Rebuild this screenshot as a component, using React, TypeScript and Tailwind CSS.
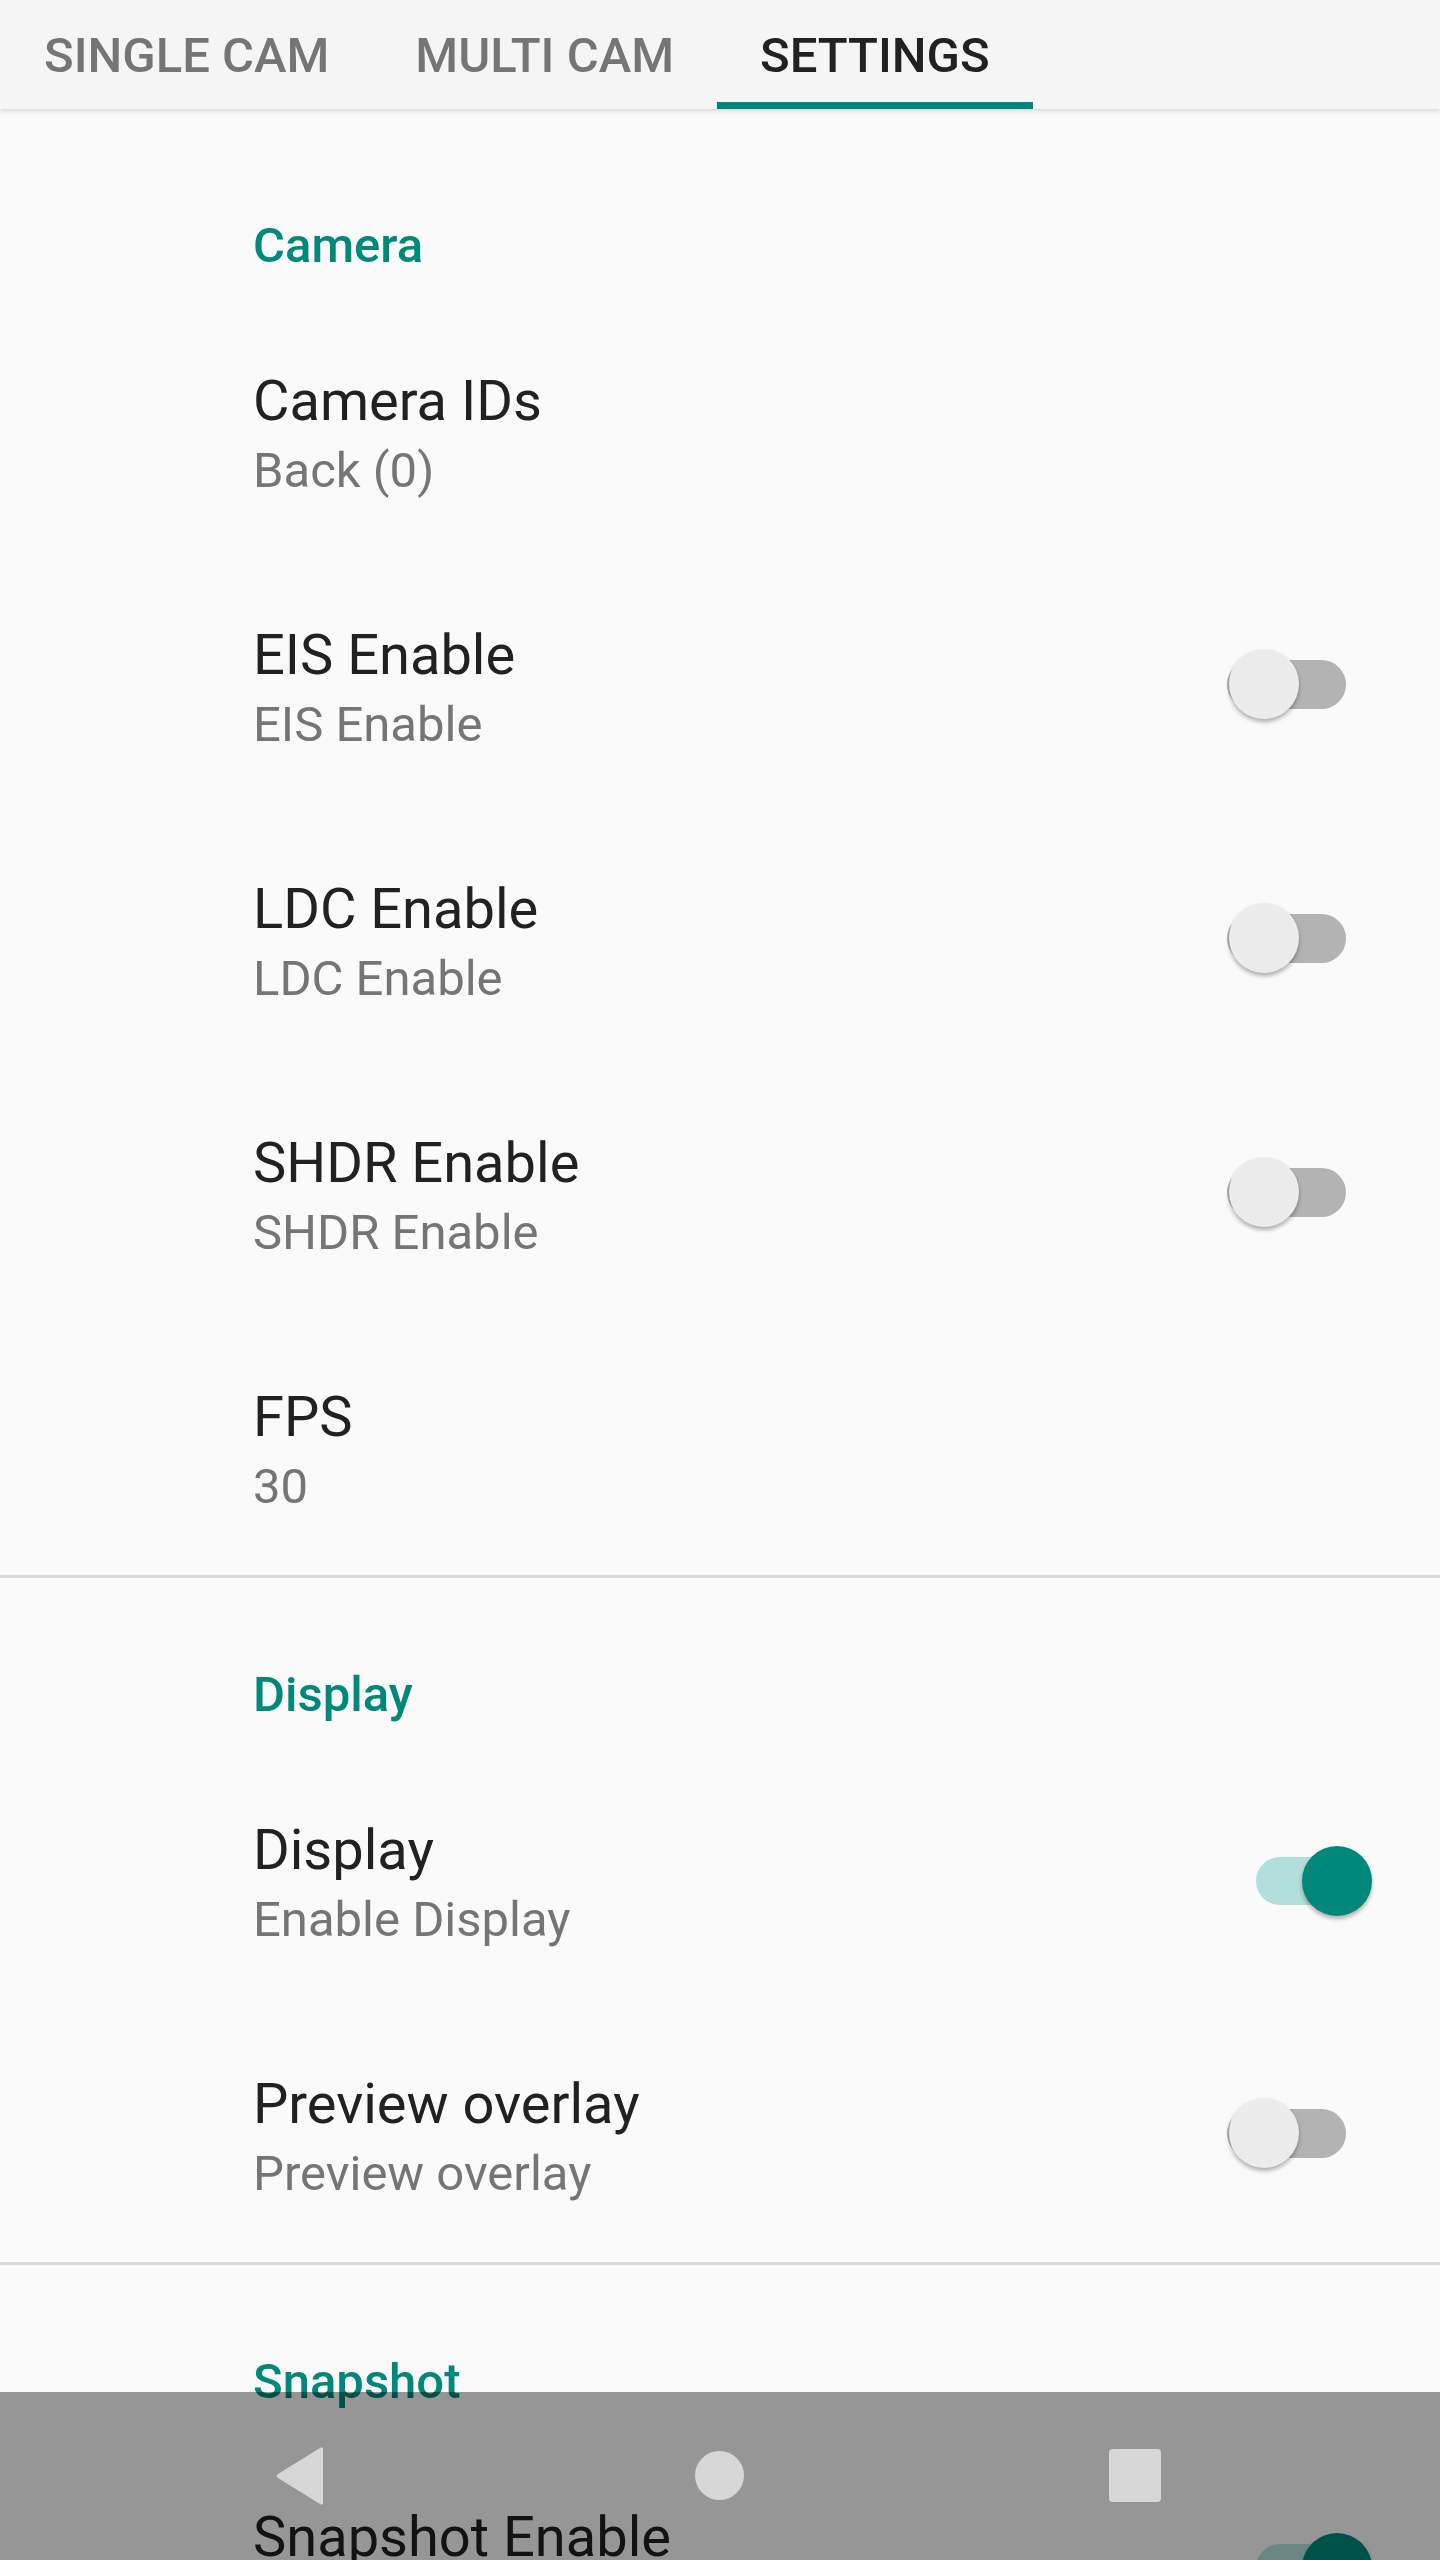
import { useState } from "react";

type Pref = {
  title: string;
  summary: string;
  toggle?: boolean;
};

const sections: { name: string; items: Pref[] }[] = [
  {
    name: "Camera",
    items: [
      { title: "Camera IDs", summary: "Back (0)" },
      { title: "EIS Enable", summary: "EIS Enable", toggle: false },
      { title: "LDC Enable", summary: "LDC Enable", toggle: false },
      { title: "SHDR Enable", summary: "SHDR Enable", toggle: false },
      { title: "FPS", summary: "30" },
    ],
  },
  {
    name: "Display",
    items: [
      { title: "Display", summary: "Enable Display", toggle: true },
      { title: "Preview overlay", summary: "Preview overlay", toggle: false },
    ],
  },
  {
    name: "Snapshot",
    items: [
      { title: "Snapshot Enable", summary: "Snapshot Enable", toggle: true },
      { title: "Snapshot format", summary: "JPEG" },
    ],
  },
];

function Switch({ on, onToggle }: { on: boolean; onToggle: () => void }) {
  if (on) {
    return (
      <button onClick={onToggle} className="relative w-[116px] h-[70px] -mr-[26px] shrink-0">
        <div className="absolute left-0 top-[11px] w-[100px] h-[48px] rounded-full bg-[#b2dfdb]" />
        <div className="absolute right-0 top-0 w-[70px] h-[70px] rounded-full bg-[#00897b] shadow-[0_3px_4px_rgba(0,0,0,0.3)]" />
      </button>
    );
  }
  return (
    <button onClick={onToggle} className="relative w-[119px] h-[70px] shrink-0 -mt-[4px]">
      <div className="absolute left-0 top-[11px] w-[119px] h-[49px] rounded-full bg-[#b3b3b3]" />
      <div className="absolute left-[2px] top-0 w-[70px] h-[70px] rounded-full bg-[#ececec] shadow-[0_3px_4px_rgba(0,0,0,0.3)]" />
    </button>
  );
}

function Row({ item }: { item: Pref }) {
  const [on, setOn] = useState(!!item.toggle);
  return (
    <div className="h-[254px] flex items-center pl-[253px] pr-[94px]">
      <div className="flex-1 flex flex-col pt-[4px]">
        <span className="text-[56px] leading-[74px] text-[#212121]">{item.title}</span>
        <span className="text-[49px] leading-[66px] text-[#757575]">{item.summary}</span>
      </div>
      {item.toggle !== undefined && <Switch on={on} onToggle={() => setOn(!on)} />}
    </div>
  );
}

export default function App() {
  const [tab, setTab] = useState(2);
  const tabs = ["SINGLE CAM", "MULTI CAM", "SETTINGS"];

  return (
    <div
      className="relative w-[1440px] h-[2560px] overflow-hidden bg-[#fafafa]"
      style={{ fontFamily: "Roboto, 'Noto Sans', sans-serif" }}
    >
      {/* tabs */}
      <div className="relative z-10 h-[109px] flex bg-[#f5f5f5] shadow-[0_2px_4px_rgba(0,0,0,0.14)]">
        {tabs.map((t, i) => (
          <button
            key={t}
            onClick={() => setTab(i)}
            className={`relative h-full flex items-center text-[49px] font-medium pt-[2px] ${
              i === 0 ? "pl-[44px] pr-[43px]" : "px-[43px]"
            } ${tab === i ? "text-[#212121]" : "text-[#757575]"}`}
          >
            {t}
            {tab === i && <span className="absolute left-0 right-0 bottom-0 h-[7px] bg-[#00897b]" />}
          </button>
        ))}
      </div>

      <div className="flex flex-col pt-[20px]">
        {sections.map((s, si) => (
          <div key={s.name} className="flex flex-col">
            {si > 0 && <div className="h-[3px] bg-[#dadada]" />}
            <div className="h-[176px] pt-[87px] pl-[253px]">
              <span className="block text-[49px] leading-[60px] font-medium text-[#00897b]">{s.name}</span>
            </div>
            {s.items.map((it) => (
              <Row key={it.title} item={it} />
            ))}
          </div>
        ))}
      </div>

      {/* nav bar overlay */}
      <div className="absolute left-0 right-0 bottom-0 h-[168px] bg-black/40 flex items-center">
        <div className="relative w-full h-full">
          <svg className="absolute left-[273px] top-[54px]" width="56" height="60" viewBox="0 0 56 60">
            <path d="M50 3 L50 57 Q50 60 47 58 L5 32 Q2 30 5 28 L47 2 Q50 0 50 3 Z" fill="#d7d7d7" />
          </svg>
          <div className="absolute left-[695px] top-[59px] w-[49px] h-[49px] rounded-full bg-[#d7d7d7]" />
          <div className="absolute left-[1109px] top-[57px] w-[52px] h-[53px] rounded-[4px] bg-[#d7d7d7]" />
        </div>
      </div>
    </div>
  );
}
